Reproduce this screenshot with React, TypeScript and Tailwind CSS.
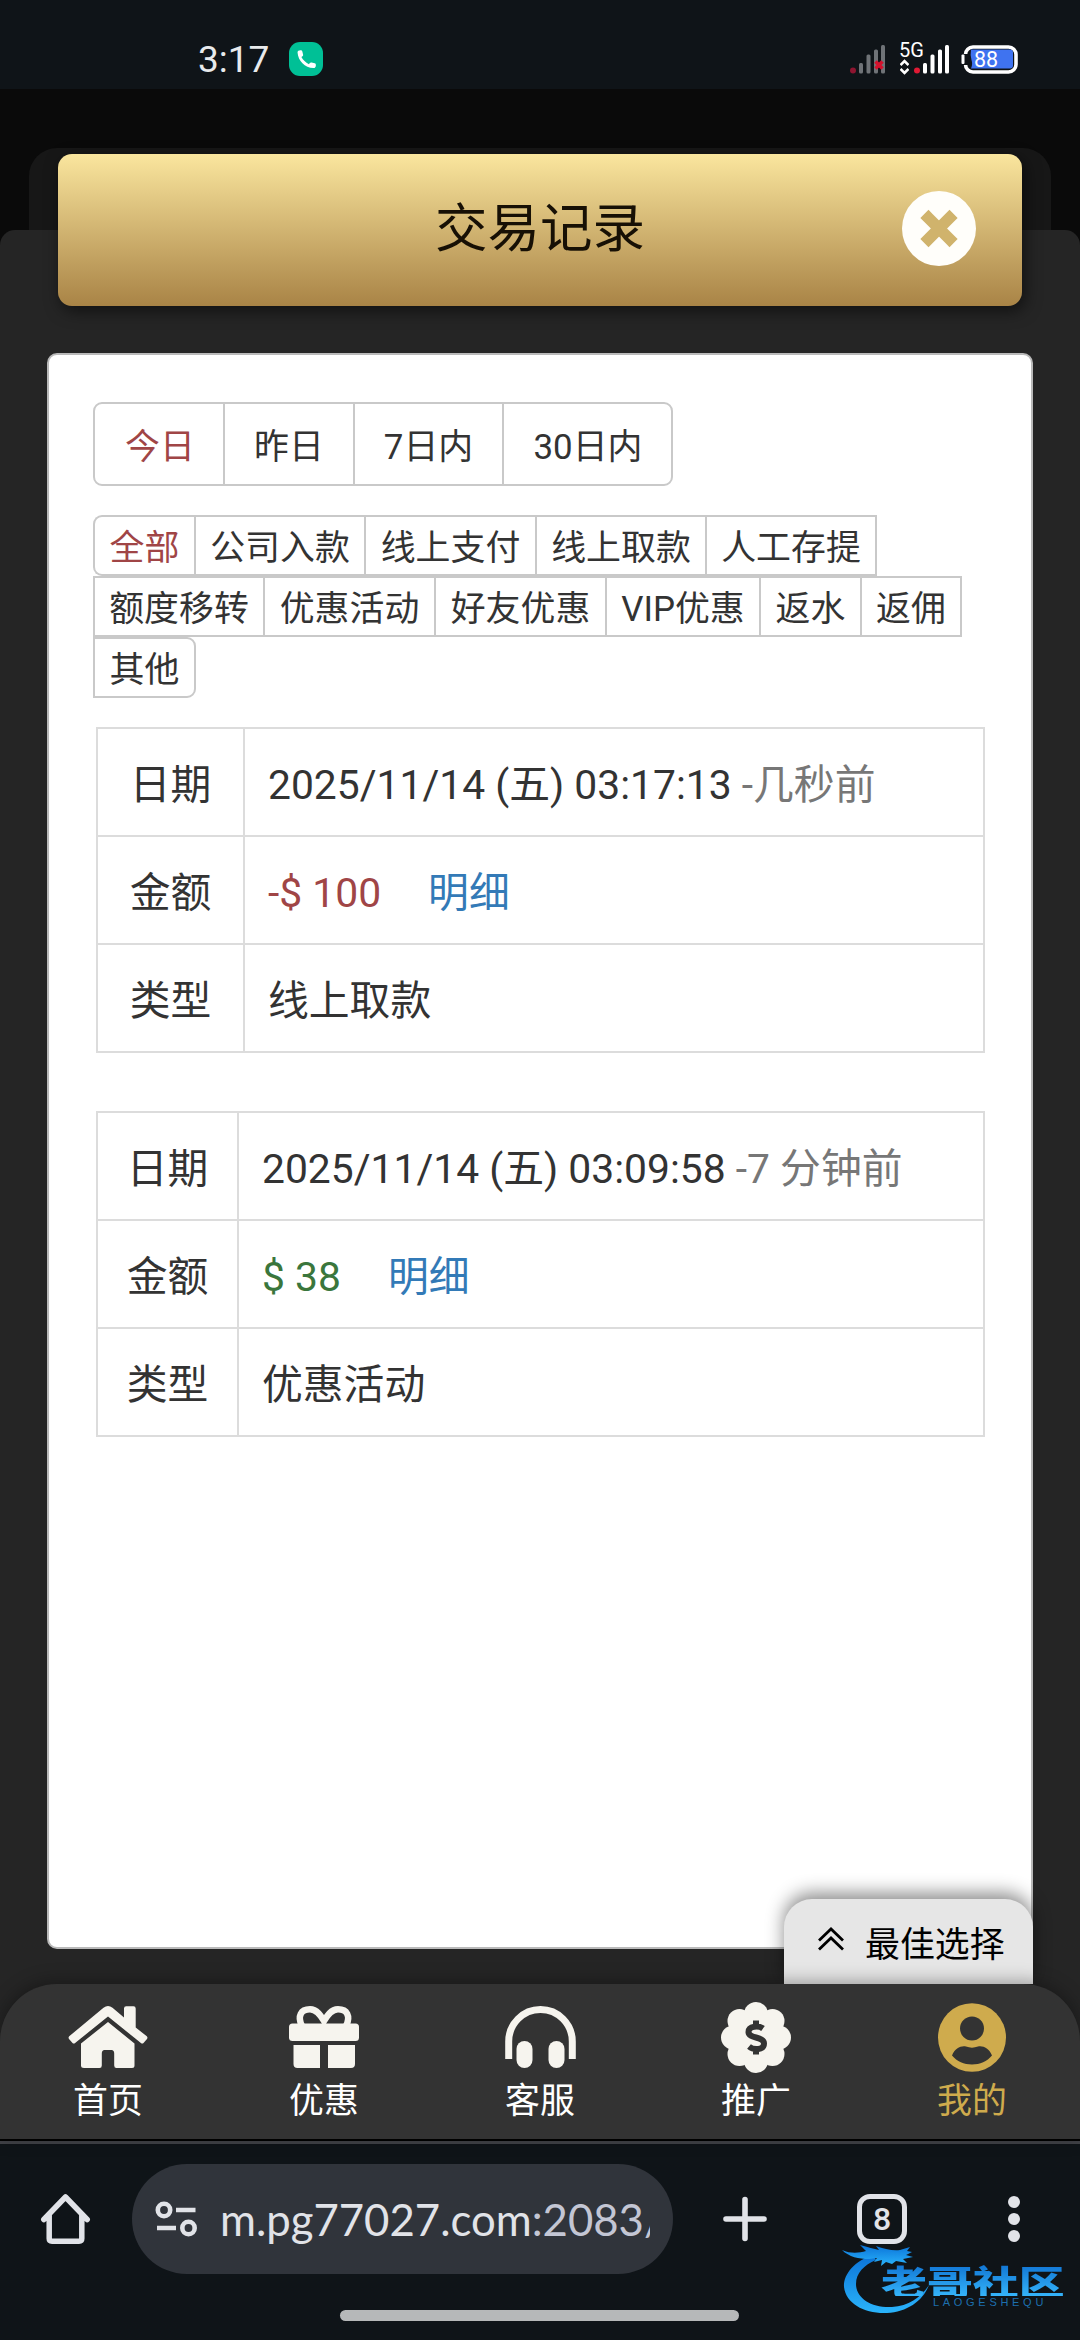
import type { ReactNode } from 'react';

const dateFilters = [
  { label: '今日', width: 'w-[130px]' },
  { label: '昨日', width: 'w-[130px]' },
  { label: '7日内', width: 'w-[149px]' },
  { label: '30日内', width: 'w-[170px]' },
];

const typeRows = [
  [
    { label: '全部', width: 'w-[101px]' },
    { label: '公司入款', width: 'w-[170px]' },
    { label: '线上支付', width: 'w-[171px]' },
    { label: '线上取款', width: 'w-[170px]' },
    { label: '人工存提', width: 'w-[172px]' },
  ],
  [
    { label: '额度移转', width: 'w-[170px]' },
    { label: '优惠活动', width: 'w-[171px]' },
    { label: '好友优惠', width: 'w-[171px]' },
    { label: 'VIP优惠', width: 'w-[154px]' },
    { label: '返水', width: 'w-[101px]' },
    { label: '返佣', width: 'w-[102px]' },
  ],
  [{ label: '其他', width: 'w-[103px]' }],
];

const records = [
  {
    labelWidth: 'w-[147px]',
    date: '2025/11/14 (五) 03:17:13',
    ago: '-几秒前',
    amount: '-$ 100',
    amountColor: 'text-[#a04546]',
    type: '线上取款',
  },
  {
    labelWidth: 'w-[141px]',
    date: '2025/11/14 (五) 03:09:58',
    ago: '-7 分钟前',
    amount: '$ 38',
    amountColor: 'text-[#3a763c]',
    type: '优惠活动',
  },
];

function SignalBars({ dim = false }: { dim?: boolean }) {
  return (
    <svg width="37" height="30" viewBox="0 0 37 30" fill={dim ? '#6f7377' : '#fff'}>
      <circle cx="4" cy="25.5" r="3" fill={dim ? '#8e1530' : '#e01a34'} />
      <rect x="10" y="18" width="4" height="10.5" rx="1.5" />
      <rect x="17.5" y="9.5" width="4" height="19" rx="1.5" />
      <rect x="25" y="4.5" width="4" height="24" rx="1.5" />
      <rect x="32" y="0" width="4" height="28.5" rx="1.5" />
      {dim && <path d="M26.5 16.5l7 7M33.5 16.5l-7 7" stroke="#d4112c" strokeWidth="3.6" />}
    </svg>
  );
}

function StatusBar() {
  return (
    <header className="flex h-[89px] shrink-0 items-start bg-[#0f1418] pt-[42px] pr-[62px] pl-[198px]">
      <span className="w-[91px] text-[37px] leading-[36px] text-[#e8eaec]">3:17</span>
      <span className="flex h-[34px] w-[34px] items-center justify-center rounded-[11px] bg-[#00c096]">
        <svg width="25" height="25" viewBox="0 0 24 24" fill="#fff">
          <path d="M3.4 5.2C3.3 3.8 4.6 3 6.2 3c1 0 1.600.3 1.800 1.200l.7 3c.2.8 0 1.200-.6 1.700l-1 .8c1.600 2.900 4 5.200 7.200 6.800l.9-1.100c.5-.6 1-.7 1.700-.5l3 .8c.8.2 1.100.8 1.100 1.700 0 1.700-.9 2.900-2.300 2.800C10.300 19.700 4 13.300 3.400 5.200z" />
        </svg>
      </span>
      <div className="ml-auto flex pt-[3px]">
        <div className="mr-[13px]">
          <SignalBars dim />
        </div>
        <div className="relative flex w-[51px] justify-end">
          <span className="absolute -top-[6px] left-0 text-[20px] leading-[22px] text-white">5G</span>
          <svg className="absolute top-[14px] left-[1px]" width="9" height="16" viewBox="0 0 9 16" fill="none" stroke="#fff" strokeWidth="2.600">
            <path d="M0.500 6L4.500 2l4 4M0.500 10l4 4 4-4" />
          </svg>
          <SignalBars />
        </div>
        <div className="relative ml-[11px] h-[29px] w-[57px]">
          <svg width="57" height="29" viewBox="0 0 57 29">
            <rect x="4.500" y="2" width="50.500" height="25" rx="7.500" fill="none" stroke="#fff" strokeWidth="3.600" />
            <rect x="0" y="9" width="7" height="11" fill="#0f1418" />
            <rect x="0.500" y="9.500" width="3" height="9.500" rx="1" fill="#fff" />
            <path d="M10 4.500h39q3 0 3 3v13q0 3-3 3H10q2-4 .5-8.500T10 4.500z" fill="#3f73f0" />
          </svg>
          <span className="absolute top-[3px] left-[13px] text-[21.5px] leading-[24px] text-white">88</span>
        </div>
      </div>
    </header>
  );
}

function TitleBar() {
  return (
    <div className="relative mx-[58px] mt-[65px] flex h-[152px] w-[964px] items-center justify-center rounded-[14px] bg-linear-to-b from-[#fae69e] to-[#a98446] shadow-[3px_5px_16px_rgba(0,0,0,0.55)]">
      <h1 className="pb-[2px] text-[52.5px] leading-[60px] text-[#171005]">交易记录</h1>
      <svg className="absolute top-[37px] right-[46px]" width="74" height="75" viewBox="0 0 74 75">
        <ellipse cx="37" cy="37.500" rx="37" ry="37.500" fill="#fffefa" />
        <path d="M26.500 27L47.500 48M47.500 27L26.500 48" stroke="#d0b36c" strokeWidth="11.500" strokeLinecap="square" />
      </svg>
    </div>
  );
}

function DateTabs() {
  return (
    <div className="flex h-[84px] w-[580px] overflow-hidden rounded-[9px] border-2 border-[#c9c9c9]">
      {dateFilters.map((f, i) => (
        <button
          key={f.label}
          className={`${f.width} shrink-0 pt-[4px] text-[34.9px] leading-[80px] ${i === 0 ? '-mr-[2px] text-[#a04546]' : 'border-l-2 border-[#c9c9c9]'}`}
        >
          {f.label}
        </button>
      ))}
    </div>
  );
}

function TypeTabs() {
  return (
    <div className="mt-[29px] flex flex-col">
      {typeRows.map((row, r) => (
        <div key={r} className="flex">
          {row.map((t, i) => {
            const first = r === 0 && i === 0;
            const last = r === typeRows.length - 1;
            return (
              <button
                key={t.label}
                className={`${t.width} h-[61px] shrink-0 border-y-2 border-l-2 border-[#c9c9c9] pt-[3px] text-[34.9px] leading-[54px] whitespace-nowrap ${i === row.length - 1 ? 'border-r-2' : ''} ${first ? 'rounded-l-[9px] text-[#a04546]' : ''} ${last ? 'rounded-r-[9px]' : ''}`}
              >
                <span className="relative top-[1.5px]">{t.label}</span>
              </button>
            );
          })}
        </div>
      ))}
    </div>
  );
}

function RecordRow({ label, labelWidth, children }: { label: string; labelWidth: string; children: ReactNode }) {
  return (
    <div className="flex h-[108px] border-b-2 border-[#dcdcdc]">
      <div className={`${labelWidth} flex shrink-0 items-center justify-center border-r-2 border-[#dcdcdc] pt-[6px]`}>{label}</div>
      <div className="flex items-center pt-[6px] pl-[23px] whitespace-pre">{children}</div>
    </div>
  );
}

function RecordTable({ record }: { record: (typeof records)[number] }) {
  return (
    <div className="ml-[3px] w-[889px] border-x-2 border-t-2 border-[#dcdcdc] text-[40.8px] leading-[60px]">
      <RecordRow label="日期" labelWidth={record.labelWidth}>
        {record.date} <span className="text-[#777]">{record.ago}</span>
      </RecordRow>
      <RecordRow label="金额" labelWidth={record.labelWidth}>
        <span className={record.amountColor}>{record.amount}</span>
        <a className="ml-[47px] text-[#337ab7]">明细</a>
      </RecordRow>
      <RecordRow label="类型" labelWidth={record.labelWidth}>
        {record.type}
      </RecordRow>
    </div>
  );
}

function HomeIcon() {
  return (
    <svg width="80" height="62" viewBox="0 0 80 62" fill="#f6f4ee">
      <path d="M35.500 1.800Q40-1.600 44.500 1.800L56 11.500V2.500Q56 .3 58.200.3H65.500Q67.700.3 67.700 2.500V21.500L78.800 30.300Q80 31.500 79 32.900L75.500 37Q74.300 38.200 72.900 37L40 10.500 7.100 37Q5.700 38.200 4.500 37L1 32.900Q0 31.500 1.200 30.300z" />
      <path d="M40 16L66.500 37.500V59.500Q66.500 62 64 62H48.500Q46.200 62 46.200 59.500V47.500Q46.200 44 43.500 44H36.500Q33.800 44 33.800 47.500V59.500Q33.800 62 31.500 62H16Q13 62 13 59.500V37.500z" />
    </svg>
  );
}

function GiftIcon() {
  return (
    <svg width="70" height="62" viewBox="0 0 70 62" fill="#f6f4ee">
      <path d="M13 20C8 10 12 3.300 21 3.300c7 0 11 6.500 14 11.700 3-5.200 7-11.700 14-11.700 9 0 13 6.700 8 16.700" fill="none" stroke="#f6f4ee" strokeWidth="6.500" />
      <rect x="0" y="17.500" width="70" height="17.500" rx="3.500" />
      <path d="M4.500 39H31V62H8.500Q4.500 62 4.500 58zM39 39H66V58Q66 62 62 62H39z" />
    </svg>
  );
}

function HeadsetIcon() {
  return (
    <svg width="71" height="62" viewBox="0 0 71 62" fill="#f6f4ee">
      <path d="M3.700 49.500V35.500a31.800 32 0 0 1 63.600 0V49.500" fill="none" stroke="#f6f4ee" strokeWidth="7" strokeLinecap="square" />
      <rect x="11.500" y="35" width="16" height="27" rx="8" />
      <rect x="43.500" y="35" width="16" height="27" rx="8" />
    </svg>
  );
}

function BadgeIcon() {
  return (
    <svg width="70" height="71" viewBox="0 0 70 71">
      <g fill="#f6f4ee">
        <circle cx="35" cy="35.500" r="27" />
        <circle cx="35" cy="12" r="12" />
        <circle cx="35" cy="59" r="12" />
        <circle cx="12" cy="35.500" r="12" />
        <circle cx="58" cy="35.500" r="12" />
        <circle cx="18.500" cy="19" r="12" />
        <circle cx="51.500" cy="19" r="12" />
        <circle cx="18.500" cy="52" r="12" />
        <circle cx="51.500" cy="52" r="12" />
      </g>
      <path d="M42 26.500C38 23.500 27.500 23.500 27.500 30c0 7 15.500 4 15.500 11.500 0 6.500-10 7-15 3M35 18.500v6M35 46.500v6" fill="none" stroke="#333" strokeWidth="6" strokeLinejoin="round" />
    </svg>
  );
}

function UserIcon() {
  return (
    <svg width="68" height="69" viewBox="0 0 68 69">
      <ellipse cx="34" cy="34.500" rx="34" ry="34.300" fill="#cfab4d" />
      <circle cx="34" cy="25.500" r="12" fill="#333" />
      <path d="M14 52.500C17 45 23 42.500 28 43.500Q34 45.800 40 43.500C45 42.500 51 45 54 52.500 49 58.500 42 61.500 34 61.500S19 58.500 14 52.500z" fill="#333" />
    </svg>
  );
}

const navItems = [
  { label: '首页', icon: <HomeIcon /> },
  { label: '优惠', icon: <GiftIcon /> },
  { label: '客服', icon: <HeadsetIcon /> },
  { label: '推广', icon: <BadgeIcon /> },
  { label: '我的', icon: <UserIcon />, active: true },
];

function BottomNav() {
  return (
    <nav className="relative z-10 flex h-[155px] shrink-0 rounded-t-[57px] bg-[#333] shadow-[0_-2px_18px_rgba(0,0,0,0.35)]">
      {navItems.map((item) => (
        <div key={item.label} className="flex w-[216px] flex-col items-center pt-[16px]">
          <div className="flex h-[74px] items-center">{item.icon}</div>
          <span className={`mt-[3px] text-[34.9px] leading-[50px] ${item.active ? 'text-[#cfab4d]' : 'text-white'}`}>{item.label}</span>
        </div>
      ))}
    </nav>
  );
}

function Watermark() {
  return (
    <div className="absolute top-[101px] left-[840px] h-[74px] w-[226px]">
      <svg width="92" height="74" viewBox="0 0 92 74" fill="none">
        <defs>
          <linearGradient id="wave" x1="0" y1="0" x2="0" y2="1">
            <stop offset="0" stopColor="#0b73d8" />
            <stop offset="1" stopColor="#2ab4fb" />
          </linearGradient>
        </defs>
        <g fill="url(#wave)">
          <path d="M33 13C14 19 3 33 4 45c2 17 21 27 43 26 20-1 36-12 42-28-8 12-20 21-37 22C31 66 16 56 16 42c0-11 8-19 20-24z" />
          <path d="M2 8c9 4 17 3 24 1l-6-6c8 2 14 4 19 5l-3-4c8 3 17 5 24 4l10-3-3 4 5 1-6 3 7 2-10 2 4 4-11-2-4 3-6-2-5 4 1-6-8 2 3-4-8 1c-10 0-20-2-27-9z" />
        </g>
      </svg>
      <span className="absolute top-[23px] left-[41px] origin-left scale-x-[1.35] bg-linear-to-b from-[#1276d4] to-[#35b4fa] bg-clip-text font-['Noto_Sans_CJK_SC'] text-[34px] leading-[31px] font-black whitespace-nowrap text-transparent">
        老哥社区
      </span>
      <span className="absolute top-[55px] left-[93px] font-['Liberation_Sans'] text-[11px] leading-[11px] tracking-[3.700px] text-[#1c6fae]">
        LAOGESHEQU
      </span>
    </div>
  );
}

function BrowserBar() {
  return (
    <footer className="relative flex h-[201px] shrink-0 flex-col border-t-2 border-black bg-[#0f1418]">
      <div className="h-[3px] bg-[#414247]" />
      <div className="mt-[20px] flex h-[110px] items-center">
        <svg className="ml-[40px]" width="51" height="52" viewBox="0 0 51 52" fill="none" stroke="#e1e3e8" strokeWidth="5.500" strokeLinejoin="round" strokeLinecap="round">
          <path d="M3.800 26.500L25.500 4 47.200 26.500M9.200 22V45.500Q9.200 48.200 12 48.200H39Q41.800 48.200 41.800 45.500V22" />
        </svg>
        <div className="ml-[41px] flex h-[110px] w-[541px] items-center rounded-full bg-[#30343b] pl-[23px]">
          <svg width="42" height="36" viewBox="0 0 42 36" fill="none" stroke="#e1e3e8" strokeWidth="4.600">
            <circle cx="9" cy="9" r="6.200" />
            <circle cx="33.500" cy="27" r="6.200" />
            <path d="M21 9h19.500M2 27h19" />
          </svg>
          <div className="ml-[23px] w-[430px] overflow-hidden font-['Lato'] text-[43.700px] leading-[60px] whitespace-nowrap text-[#e1e3e8]">
            m.pg77027.com<span className="text-[#c3c6d4]">:2083/</span>
          </div>
        </div>
        <svg className="ml-[50px]" width="44" height="46" viewBox="0 0 44 46" stroke="#e1e3e8" strokeWidth="5.600" strokeLinecap="round">
          <path d="M22 3.500v39M3 23h38" />
        </svg>
        <div className="ml-[90px] flex h-[50px] w-[50px] items-center justify-center rounded-[13px] border-[5.5px] border-[#e1e3e8] font-['Roboto'] text-[32px] leading-[38px] font-medium text-[#e1e3e8]">
          8
        </div>
        <div className="ml-[101px] flex flex-col gap-[5px]">
          <i className="h-[12px] w-[12px] rounded-full bg-[#e1e3e8]" />
          <i className="h-[12px] w-[12px] rounded-full bg-[#e1e3e8]" />
          <i className="h-[12px] w-[12px] rounded-full bg-[#e1e3e8]" />
        </div>
      </div>
      <div className="mt-[36px] ml-[340px] h-[11px] w-[399px] rounded-full bg-[#b6b8b9]" />
      <Watermark />
    </footer>
  );
}

export default function App() {
  return (
    <div className="flex h-[2340px] w-[1080px] flex-col overflow-hidden bg-[#252525] font-['Roboto','Noto_Sans_CJK_SC',sans-serif] text-[#333]">
      <StatusBar />
      <main className="relative isolate h-[1895px] shrink-0 bg-[#0a0a0a]">
        <div className="absolute top-[59px] right-[29px] left-[29px] -z-10 h-[200px] rounded-[28px] bg-[#171717]" />
        <div className="absolute inset-x-0 top-[141px] -bottom-[80px] -z-10 rounded-t-[15px] bg-[#252525]" />
        <div className="flex flex-col">
          <TitleBar />
          <section className="mt-[47px] ml-[47px] h-[1596px] w-[986px] rounded-[10px] border-2 border-[#b9b9b9] bg-white pt-[47px] pl-[44px]">
            <DateTabs />
            <TypeTabs />
            <div className="mt-[29px] flex flex-col gap-[58px]">
              {records.map((r) => (
                <RecordTable key={r.date} record={r} />
              ))}
            </div>
          </section>
        </div>
        <button className="absolute right-[47px] bottom-0 flex h-[85px] w-[249px] items-center rounded-t-[28px] bg-[#e6e6e6] pt-[9px] pl-[34px] text-[34.9px] leading-[50px] text-black shadow-[0_-6px_18px_rgba(0,0,0,0.45)]">
          <svg className="mr-[21px] -mt-[15px]" width="26" height="24" viewBox="0 0 26 24" fill="none" stroke="#000" strokeWidth="2.800">
            <path d="M1 13.500L13 2l12 11.500M1 22.500L13 11l12 11.500" />
          </svg>
          最佳选择
        </button>
      </main>
      <BottomNav />
      <BrowserBar />
    </div>
  );
}
